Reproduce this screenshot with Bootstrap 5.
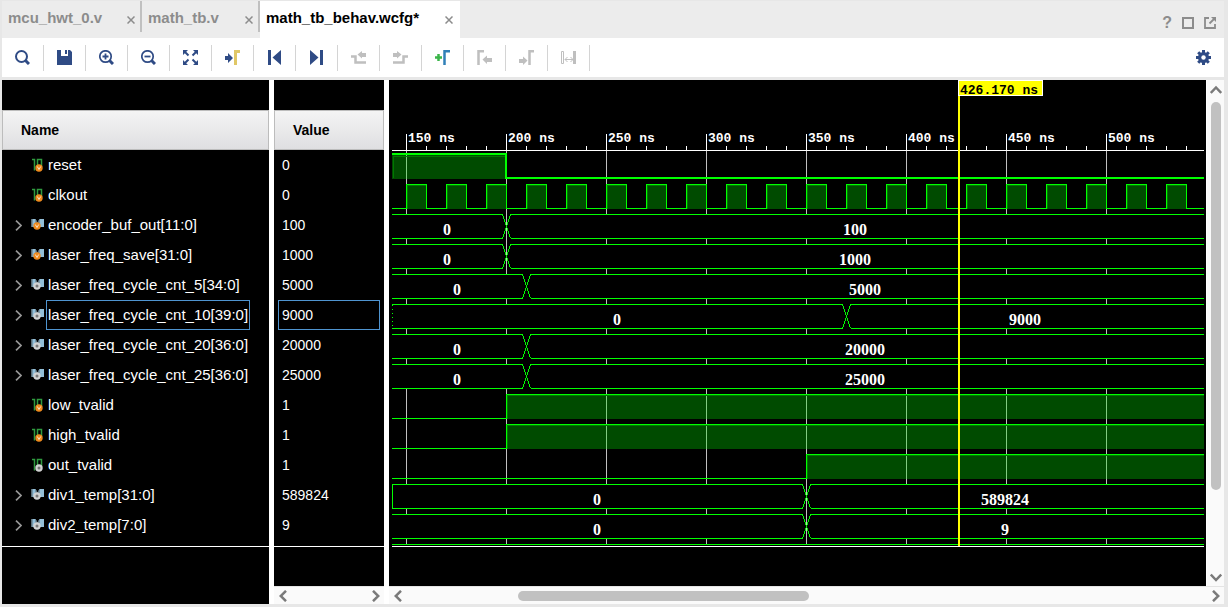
<!DOCTYPE html>
<html lang="en">
<head>
<meta charset="utf-8">
<meta name="viewport" content="width=device-width, initial-scale=1">
<title>math_tb_behav.wcfg</title>
<link href="https://cdn.jsdelivr.net/npm/bootstrap@5.3.0/dist/css/bootstrap.min.css" rel="stylesheet">
<style>
  :root { --chrome: #ececec; --edge: #e7e7e7; --ink: #2f4b85; --off: #bfbfbf; --row: 30px; }
  body { font: 15px/20px "Liberation Sans", Arial, sans-serif; background: var(--edge); color: #000; }
  button { border: 0; background: none; padding: 0; color: inherit; }
  svg { display: block; }
  .app { padding: 1px 4px 3px 2px; }

  .tabbar { background: var(--chrome); height: 37px; }
  .file-tab { height: 31px; padding: 3px 5px 0 6px; color: #8c8c8c; font-weight: 700; border-right: 2px solid #c0c0c0; }
  .file-tab a { color: inherit; text-decoration: none; }
  .file-tab.current { height: 37px; background: #fff; color: #000; border-right: 2px solid #fff; padding-bottom: 6px; }
  .file-tab button { color: #8c8c8c; padding-top: 4px; }
  .w-tab1 { width: 140px; } .w-tab2 { width: 118px; } .w-tab3 { width: 200px; }
  .window-tools { color: #8c8c8c; gap: 10px; padding: 6px 8px 0 0; }
  .window-tools .help { font-size: 16px; font-weight: 700; }

  .toolstrip { height: 39px; background: #fff; color: var(--ink); }
  .toolstrip .tool { width: 42px; height: 26px; border-right: 1px solid #d4d4d4; display: flex; align-items: center; justify-content: center; }
  .toolstrip .tool:disabled { color: var(--off); }
  .toolstrip .gear { padding-right: 13px; }

  .panes { margin-top: 3px; background: #fff; gap: 5px; }
  .pane { background: #000; color: #fff; padding-top: 30px; }
  .pane-names { width: 267px; }
  .pane-values { width: 110px; font-size: 14px; }
  .pane-head { height: 40px; padding-left: 18px; font-size: 14px; font-weight: 700; color: #000; border: 1px solid #bcbcbc; background: linear-gradient(#f4f4f4, #dfdfe1); }
  .rows { border-bottom: 1px solid #fff; padding-bottom: 6px; }
  .rows li { height: var(--row); display: flex; align-items: center; }
  .twisty { width: 29px; height: 30px; padding: 1px 0 0 13px; flex: none; }
  .tag { margin: 0 1px 0 0; flex: none; }
  .sig { height: 30px; line-height: 28px; padding: 0 1px; border: 1px solid transparent; white-space: nowrap; }
  .val { height: 30px; line-height: 28px; margin: 0 4px; padding: 0 3px; border: 1px solid transparent; flex: 1; }
  .picked { border-color: #4f94d0; }

  .wave { background: #000; padding: 0 2px 0 3px; flex: 1; min-height: 505px; }
  .wave svg { width: 100%; height: 467px; shape-rendering: crispEdges; }
  .wave text { font: 700 16px "Liberation Serif", serif; fill: #fff; }
  .wave .scale { font: 700 13px "Liberation Mono", monospace; }
  .wave .flagtext { fill: #000; }
  .line { stroke: #0f0; fill: none; }

  .track { background: #fafafa; color: #7a7a7a; }
  .track-h { height: 18px; border-top: 1px solid #e4e4e4; padding: 0 4px 0 5px; }
  .track-v { width: 18px; border-left: 1px solid #fff; padding: 4px 0 3px; }
  .thumb { background: #c1c1c1; border-radius: 5px; }
  .thumb-h { width: 35.3%; height: 10px; margin-left: 14%; }
  .thumb-v { width: 10px; height: 388px; margin-top: 6px; }
</style>
</head>
<body>
<svg width="0" height="0" class="position-absolute" aria-hidden="true">
  <symbol id="x" viewBox="0 0 8 8"><path d="M.5.5l7 7M7.5.5L.5 7.500" stroke="currentColor" stroke-width="1.500"/></symbol>
  <symbol id="chev" viewBox="0 0 7 11"><path d="M1 .7L6 5.500 1 10.300" fill="none" stroke="#969696" stroke-width="1.700"/></symbol>
  <symbol id="arrow" viewBox="0 0 8 12"><path d="M1 .8L6.3 6 1 11.2" fill="none" stroke="currentColor" stroke-width="2.5"/></symbol>
  <symbol id="bit" viewBox="0 0 14 14"><path d="M1 1.500h2.500v11M6.500 12.500v-11h4v7M5.500 12h1" fill="none" stroke="#2f9a3f" stroke-width="1.500"/></symbol>
  <symbol id="bus" viewBox="0 0 14 14"><path d="M0 1h4.500l2 3.500 2-3.500H13v8H9L4 9H0z" fill="#93bfd8"/><path d="M0 1h1.500v8H0zM4.500 1l2 3.500 2-3.500v5h-4z" fill="#5c6e78"/></symbol>
  <symbol id="ov" viewBox="0 0 8 8"><circle cx="4" cy="4" r="3.700" fill="#ef8a1d"/><path d="M2.300 2.500L4 5.500l1.700-3" fill="none" stroke="#fbe3c6" stroke-width="1"/></symbol>
  <symbol id="og" viewBox="0 0 8 8"><circle cx="4" cy="4" r="3.700" fill="#d2d2d2"/><circle cx="4" cy="4" r="1.500" fill="#777"/></symbol>
</svg>

<div class="app d-flex flex-column min-vh-100">
  <header class="tabbar d-flex align-items-start">
    <div class="file-tab w-tab1 d-flex align-items-center justify-content-between"><a href="#">mcu_hwt_0.v</a><button aria-label="Close mcu_hwt_0.v"><svg width="8" height="8"><use href="#x"/></svg></button></div>
    <div class="file-tab w-tab2 d-flex align-items-center justify-content-between"><a href="#">math_tb.v</a><button aria-label="Close math_tb.v"><svg width="8" height="8"><use href="#x"/></svg></button></div>
    <div class="file-tab current w-tab3 d-flex align-items-center justify-content-between"><a href="#">math_tb_behav.wcfg*</a><button aria-label="Close math_tb_behav.wcfg"><svg width="8" height="8"><use href="#x"/></svg></button></div>
    <div class="window-tools ms-auto d-flex align-items-center align-self-center">
      <button class="help" aria-label="Help">?</button>
      <button aria-label="Maximize"><svg width="12" height="12"><path d="M1 1h10v10H1z" fill="none" stroke="currentColor" stroke-width="2"/></svg></button>
      <button aria-label="Float"><svg width="12" height="12"><path d="M5 1H1v10h10V7" fill="none" stroke="currentColor" stroke-width="1.800"/><path d="M5.500 6.500L10 2" stroke="currentColor" stroke-width="1.800"/><path d="M7 0h5v5z" fill="currentColor"/></svg></button>
    </div>
  </header>

  <nav class="toolstrip d-flex align-items-center" aria-label="Waveform tools">
    <button class="tool" aria-label="Find"><svg width="15" height="15"><circle cx="6.500" cy="6.500" r="5.500" fill="none" stroke="currentColor" stroke-width="2"/><path d="M10.500 10.500l3.500 3.500" stroke="currentColor" stroke-width="3"/></svg></button>
    <button class="tool" aria-label="Save"><svg width="15" height="15"><path d="M0 0h4v6h7V0h2l2 2v13H0z" fill="currentColor"/><path d="M8 0h2v4H8z" fill="currentColor"/></svg></button>
    <button class="tool" aria-label="Zoom in"><svg width="15" height="15"><circle cx="6.500" cy="6.500" r="5.700" fill="none" stroke="currentColor" stroke-width="1.700"/><path d="M10.500 10.500l3.500 3.500" stroke="currentColor" stroke-width="3"/><path d="M3.500 6.500h6M6.500 3.500v6" stroke="currentColor" stroke-width="1.800"/></svg></button>
    <button class="tool" aria-label="Zoom out"><svg width="15" height="15"><circle cx="6.500" cy="6.500" r="5.700" fill="none" stroke="currentColor" stroke-width="1.700"/><path d="M10.500 10.500l3.500 3.500" stroke="currentColor" stroke-width="3"/><path d="M3.500 6.500h6" stroke="currentColor" stroke-width="1.800"/></svg></button>
    <button class="tool" aria-label="Zoom fit"><svg width="15" height="15"><path d="M0 0h5L0 5zM10 0h5v5zM0 10v5h5zM15 10v5h-5z" fill="currentColor"/><path d="M1.500 1.500L5.500 5.500M13.500 1.500l-4 4M1.500 13.500l4-4M13.500 13.500l-4-4" stroke="currentColor" stroke-width="2"/></svg></button>
    <button class="tool" aria-label="Go to cursor"><svg width="15" height="15"><path d="M0 6h3V3l5 5-5 5v-3H0z" fill="currentColor"/><path d="M10.500 15V1.500H15" fill="none" stroke="#e0c766" stroke-width="3"/></svg></button>
    <button class="tool" aria-label="Go to start"><svg width="15" height="15"><path d="M1 0h3v15H1zM14 0v15L5.500 7.500z" fill="currentColor"/></svg></button>
    <button class="tool" aria-label="Go to end"><svg width="15" height="15"><path d="M11 0h3v15h-3zM1 0v15L9.500 7.500z" fill="currentColor"/></svg></button>
    <button class="tool" disabled aria-label="Previous transition"><svg width="15" height="15"><path d="M0 6.500h4.500v6H15" fill="none" stroke="currentColor" stroke-width="2.500"/><path d="M6.500 4.500L11 1v2h4v4h-4v1.500z" fill="currentColor"/></svg></button>
    <button class="tool" disabled aria-label="Next transition"><svg width="15" height="15"><path d="M15 6.500h-4.500v6H0" fill="none" stroke="currentColor" stroke-width="2.500"/><path d="M8.500 4.500L4 1v2H0v4h4v1.500z" fill="currentColor"/></svg></button>
    <button class="tool" aria-label="Add marker"><svg width="15" height="15"><path d="M0 7.500h7M3.500 4v7" stroke="#3bb54a" stroke-width="2.500"/><path d="M9.500 15V1.200H15" fill="none" stroke="#3080b8" stroke-width="2.500"/></svg></button>
    <button class="tool" disabled aria-label="Previous marker"><svg width="15" height="15"><path d="M1.500 15V1.200H7" fill="none" stroke="currentColor" stroke-width="2.500"/><path d="M5.500 9.500L10 5.500V8h5v4h-5v2z" fill="currentColor"/></svg></button>
    <button class="tool" disabled aria-label="Next marker"><svg width="15" height="15"><path d="M10.500 15V1.200H15" fill="none" stroke="currentColor" stroke-width="2.500"/><path d="M8.500 10.500L4 6.500V9H0v4h4v2z" fill="currentColor"/></svg></button>
    <button class="tool" disabled aria-label="Swap cursors"><svg width="15" height="15"><path d="M.5 1.500h2v12h-2zM4 9.500h8M6.500 7L4 9.500 6.500 12M9.500 7L12 9.500 9.500 12" fill="none" stroke="currentColor"/><path d="M12 1h3v13h-3z" fill="currentColor"/></svg></button>
    <button class="gear ms-auto" aria-label="Settings"><svg width="15" height="15"><path d="M7.500 0v15M0 7.500h15M2.200 2.200l10.600 10.600M12.800 2.200L2.200 12.800" stroke="currentColor" stroke-width="3"/><circle cx="7.500" cy="7.500" r="5.500" fill="currentColor"/><circle cx="7.500" cy="7.500" r="2.200" fill="#fff"/></svg></button>
  </nav>

  <main class="panes d-flex flex-grow-1">
    <section class="pane pane-names">
      <div class="pane-head d-flex align-items-center">Name</div>
      <ul class="rows list-unstyled mb-0" id="names"></ul>
    </section>
    <section class="pane-values d-flex flex-column">
      <div class="pane flex-grow-1">
        <div class="pane-head d-flex align-items-center">Value</div>
        <ul class="rows list-unstyled mb-0" id="values"></ul>
      </div>
      <div class="track track-h d-flex align-items-center justify-content-between">
        <svg width="8" height="12"><use href="#arrow" width="8" height="12" transform="rotate(180 4 6)"/></svg>
        <svg width="8" height="12"><use href="#arrow" width="8" height="12"/></svg>
      </div>
    </section>
    <section class="d-flex flex-column flex-grow-1">
      <div class="d-flex flex-grow-1">
        <div class="wave"><svg id="wave" role="img" aria-label="Waveforms"></svg></div>
        <div class="track track-v d-flex flex-column align-items-center">
          <svg width="12" height="12" viewBox="0 0 12 12"><path d="M.8 9L6 3.500 11.200 9" fill="none" stroke="currentColor" stroke-width="2.500"/></svg>
          <div class="thumb thumb-v"></div>
          <svg class="mt-auto" width="12" height="12" viewBox="0 0 12 12"><path d="M.8 3.500L6 9l5.200-5.500" fill="none" stroke="currentColor" stroke-width="2.500"/></svg>
        </div>
      </div>
      <div class="track track-h d-flex align-items-center">
        <svg width="8" height="12"><use href="#arrow" width="8" height="12" transform="rotate(180 4 6)"/></svg>
        <div class="thumb thumb-h"></div>
        <svg class="ms-auto" width="8" height="12"><use href="#arrow" width="8" height="12"/></svg>
      </div>
    </section>
  </main>
</div>

<script src="https://cdn.jsdelivr.net/npm/bootstrap@5.3.0/dist/js/bootstrap.bundle.min.js"></script>
<script>
// Each trace is a list of [start time in ns, value]; bits hold 0 or 1.
const clock = [];
for (let t = 140; t < 1000; t += 20) clock.push([t, 0], [t + 10, 1]);
const signals = [
  { name: 'reset', now: '0', bit: true, strong: true, src: 'ov', trace: [[140, 1], [200, 0]] },
  { name: 'clkout', now: '0', bit: true, src: 'ov', trace: clock },
  { name: 'encoder_buf_out[11:0]', now: '100', src: 'ov', trace: [[140, '0'], [200, '100']] },
  { name: 'laser_freq_save[31:0]', now: '1000', src: 'ov', trace: [[140, '0'], [200, '1000']] },
  { name: 'laser_freq_cycle_cnt_5[34:0]', now: '5000', src: 'og', trace: [[140, '0'], [210, '5000']] },
  { name: 'laser_freq_cycle_cnt_10[39:0]', now: '9000', src: 'og', picked: true, edge: '1 3', trace: [[140, '0'], [370, '9000']] },
  { name: 'laser_freq_cycle_cnt_20[36:0]', now: '20000', src: 'og', trace: [[140, '0'], [210, '20000']] },
  { name: 'laser_freq_cycle_cnt_25[36:0]', now: '25000', src: 'og', trace: [[140, '0'], [210, '25000']] },
  { name: 'low_tvalid', now: '1', bit: true, src: 'ov', trace: [[140, 0], [200, 1]] },
  { name: 'high_tvalid', now: '1', bit: true, src: 'ov', trace: [[140, 0], [200, 1]] },
  { name: 'out_tvalid', now: '1', bit: true, src: 'og', trace: [[140, 0], [350, 1]] },
  { name: 'div1_temp[31:0]', now: '589824', src: 'og', edge: 'none', trace: [[140, '0'], [350, '589824']] },
  { name: 'div2_temp[7:0]', now: '9', src: 'og', trace: [[140, '0'], [350, '9']] }
];

document.getElementById('names').innerHTML = signals.map(s => `
  <li>${s.bit ? '<span class="twisty"></span>' : `<button class="twisty" aria-label="Expand ${s.name}"><svg width="7" height="11"><use href="#chev" width="7" height="11"/></svg></button>`}
    <svg class="tag" width="14" height="14"><use href="#${s.bit ? 'bit' : 'bus'}" width="14" height="14"/><use href="#${s.src}" x="${s.bit ? 4 : 2}" y="${s.bit ? 6 : 4}" width="8" height="8"/></svg>
    <span class="sig ${s.picked ? 'picked' : ''}">${s.name}</span></li>`).join('');
document.getElementById('values').innerHTML = signals.map(s =>
  `<li><span class="val ${s.picked ? 'picked' : ''}">${s.now}</span></li>`).join('');

const wave = document.getElementById('wave');
const px = t => 14 + (t - 150) * 2;
const top0 = 70, rowH = 30;

function draw() {
  const w = wave.clientWidth;
  const lastRow = top0 + signals.length * rowH;
  let out = '';
  for (let t = 150; px(t) < w; t += 10) {
    const x = px(t) + .5;
    if (t % 50) { out += `<path d="M${x} 66v4" stroke="#fff"/>`; continue; }
    out += `<path d="M${x} 54v16" stroke="#fff"/><path d="M${x} 71V${lastRow + 4}" stroke="#c0c0c0"/>`;
    out += `<text class="scale" x="${px(t) + 2}" y="62">${t} ns</text>`;
  }
  out += `<path d="M0 70.5H${w}" stroke="#fff"/>`;
  signals.forEach((s, i) => {
    // A strong line is two pixels wide, so it sits on a pixel boundary.
    const half = s.strong ? 0 : .5;
    const y = top0 + i * rowH, hi = y + 4 + half, lo = y + 28 + half;
    let d = '';
    s.trace.forEach(([t, v], k) => {
      const a = Math.max(px(t), 0), more = k + 1 < s.trace.length;
      const b = more ? px(s.trace[k + 1][0]) : w;
      if (a > w || b <= 0) return;
      if (s.bit) {
        if (v) out += `<path d="M${a} ${hi}H${b}V${y + 29}H${a}z" fill="#00e300" fill-opacity=".33"/><path d="M${a + 1.5} ${lo}V${y + 5.5 + (s.strong ? 1 : 0)}H${b}" fill="none" stroke="#007800"/>`;
        d += `${d ? 'V' : 'M0 '}${v ? hi : lo}H${b + half}`;
      } else {
        const l = k ? a + 4.5 : 0, r = more ? b - 3.5 : w;
        out += `<path d="M${l} ${hi}H${r}V${lo}H${l}z" fill="#000"/>`;
        d += `M${l} ${hi}H${r}M${l} ${lo}H${r}`;
        if (more) d += `M${r} ${hi}l8 24M${r} ${lo}l8 -24`;
        out += `<text x="${Math.round(((k ? a : -5) + Math.min(b, w)) / 2)}" y="${y + 25}" text-anchor="middle">${v}</text>`;
      }
    });
    out += `<path class="line" d="${d}" stroke-width="${s.strong ? 2 : 1}"/>`;
    if (s.edge) out += `<path class="line" d="M.5 ${hi}v24" stroke-dasharray="${s.edge}"/>`;
  });
  out += `<path class="line" d="M0 ${lastRow + 4.5}H${w}"/><path d="M0 ${lastRow + 6.5}H${w}" stroke="#fff"/>`;
  const c = 566;
  out += `<path d="M${c + 1} 0V${lastRow + 6}" stroke="#ff0" stroke-width="2"/><path d="M${c + .5} .5h84v15h-84z" fill="#ff0" stroke="#fff"/><text class="scale flagtext" x="${c + 2}" y="14">426.170 ns</text>`;
  wave.innerHTML = out;
}
draw();
addEventListener('resize', draw);
</script>
</body>
</html>
